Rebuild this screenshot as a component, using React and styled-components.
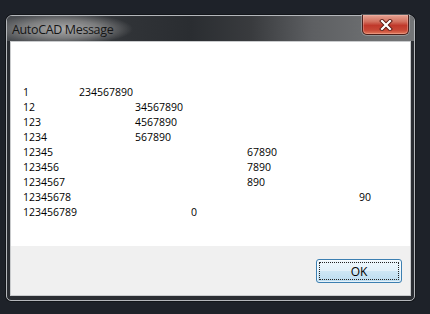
import React from "react";
import styled, { createGlobalStyle } from "styled-components";

const Global = createGlobalStyle`
  html, body { margin: 0; padding: 0; }
  body {
    background: #1e2229;
    width: 430px;
    height: 314px;
    overflow: hidden;
  }
`;

const Page = styled.div`
  padding: 15px 0 0 6px;
`;

const Window = styled.div`
  box-sizing: border-box;
  width: 409px;
  height: 286px;
  border: 1px solid #b4b7bb;
  border-radius: 6px 6px 5px 5px;
  background: #2b2e33;
  display: flex;
  flex-direction: column;
  box-shadow: 0 0 0 1px rgba(0,0,0,0.35);
`;

const TitleBar = styled.div`
  height: 25px;
  flex: none;
  display: flex;
  align-items: center;
  padding-left: 5px;
  border-radius: 5px 5px 0 0;
  background:
    radial-gradient(ellipse 70px 16px at 56px 13px, rgba(175,175,175,0.95) 0%, rgba(150,150,150,0.7) 55%, rgba(120,120,120,0) 100%),
    linear-gradient(90deg, #4a4d51 0%, #303337 30%, #2a2d31 45%, #393b3e 60%, #5d5f62 75%, #6d6f71 90%, #737577 100%);
`;

const Title = styled.span`
  font-family: "Open Sans", "Noto Sans", sans-serif;
  font-size: 12.5px;
  color: #151515;
  letter-spacing: -0.35px;
  padding-top: 1px;
`;

const CloseButton = styled.div`
  box-sizing: border-box;
  margin-left: auto;
  margin-right: 5px;
  align-self: flex-start;
  margin-top: -1px;
  width: 47px;
  height: 20px;
  border: 1px solid #4b1f1a;
  border-top: none;
  border-radius: 0 0 5px 5px;
  background: linear-gradient(180deg, #e6a393 0%, #d2705e 35%, #c0392b 55%, #c74836 80%, #e07a5c 100%);
  box-shadow: inset 0 0 0 1px rgba(255,200,190,0.35), 0 0 0 1px rgba(220,220,220,0.35);
  display: flex;
  align-items: center;
  justify-content: center;
`;

const Body = styled.div`
  flex: 1;
  display: flex;
  flex-direction: column;
  padding: 0 3px 4px 3px;
`;

const Client = styled.div`
  flex: 1;
  display: flex;
  flex-direction: column;
  border: 1px solid #c9cbcd;
`;

const MessageArea = styled.div`
  height: 204px;
  flex: none;
  background: #ffffff;
  box-sizing: border-box;
  padding: 43px 0 0 12px;
  font-family: "Open Sans", "Noto Sans", sans-serif;
  font-size: 10.5px;
  color: #000;
`;

const Row = styled.div`
  display: flex;
  height: 15px;
  line-height: 15px;
  white-space: pre;
`;

const Head = styled.span`
  width: ${(p) => p.$tab}px;
  flex: none;
`;

const Footer = styled.div`
  flex: 1;
  background: #f0f0f0;
  display: flex;
  justify-content: flex-end;
  align-items: flex-start;
  padding: 13px 8px 0 0;
`;

const OkButton = styled.button`
  position: relative;
  box-sizing: border-box;
  width: 86px;
  height: 24px;
  margin: 0;
  padding: 0;
  border: 1px solid #3c7fb1;
  border-radius: 3px;
  background: linear-gradient(180deg, #eef7fc 0%, #e3f1fa 48%, #cde6f5 52%, #bcdcf0 100%);
  box-shadow: inset 0 0 0 1px rgba(255,255,255,0.6);
  font-family: "Open Sans", "Noto Sans", sans-serif;
  font-size: 12px;
  color: #000;
  &::after {
    content: "";
    position: absolute;
    inset: 2px;
    border: 1px dotted #222;
    border-radius: 1px;
  }
`;

const rows = [
  ["1", 56, "234567890"],
  ["12", 112, "34567890"],
  ["123", 112, "4567890"],
  ["1234", 112, "567890"],
  ["12345", 224, "67890"],
  ["123456", 224, "7890"],
  ["1234567", 224, "890"],
  ["12345678", 336, "90"],
  ["123456789", 168, "0"],
];

export default function App() {
  return (
    <>
      <Global />
      <Page>
        <Window>
          <TitleBar>
            <Title>AutoCAD Message</Title>
            <CloseButton>
              <svg width="14" height="12" viewBox="0 0 14 12">
                <path d="M3 2 L11 10 M11 2 L3 10" stroke="#5a1a12" strokeWidth="4" strokeLinecap="square" />
                <path d="M3 2 L11 10 M11 2 L3 10" stroke="#ffffff" strokeWidth="2.2" strokeLinecap="square" />
              </svg>
            </CloseButton>
          </TitleBar>
          <Body>
            <Client>
              <MessageArea>
                {rows.map(([head, tab, tail]) => (
                  <Row key={head}>
                    <Head $tab={tab}>{head}</Head>
                    <span>{tail}</span>
                  </Row>
                ))}
              </MessageArea>
              <Footer>
                <OkButton>OK</OkButton>
              </Footer>
            </Client>
          </Body>
        </Window>
      </Page>
    </>
  );
}
